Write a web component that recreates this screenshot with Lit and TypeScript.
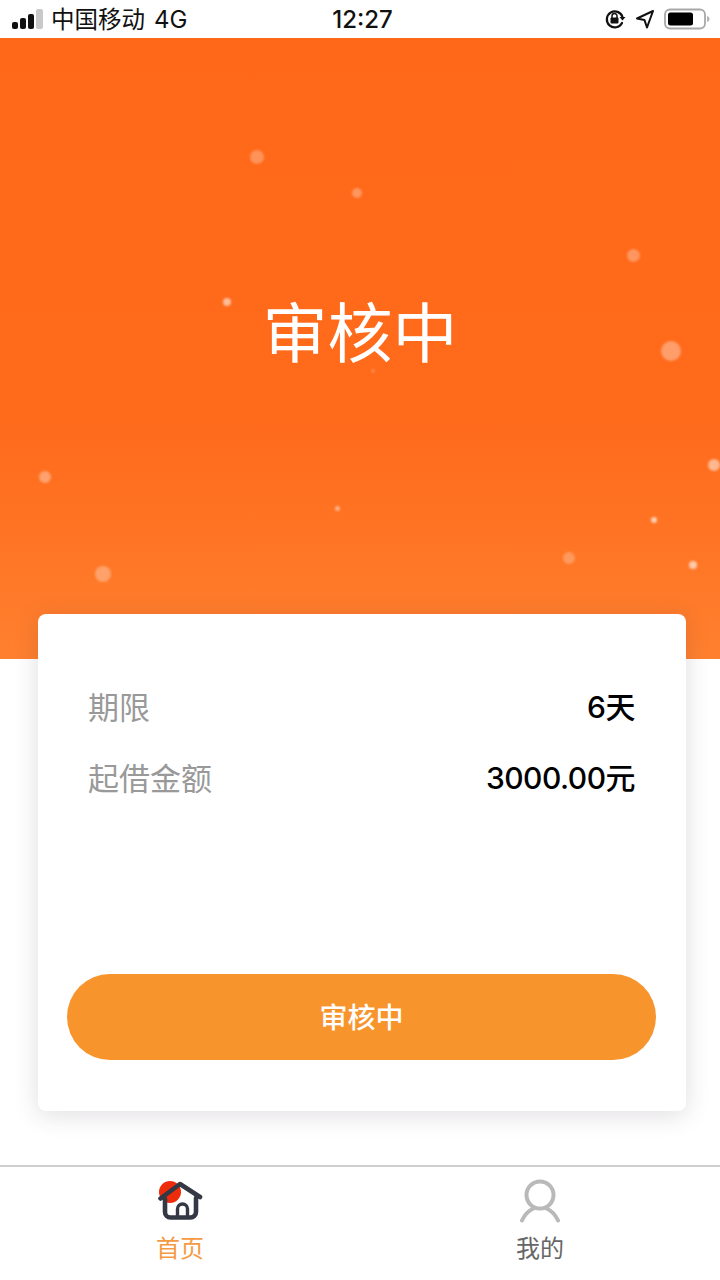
import { LitElement, html, css } from "lit";
import { customElement } from "lit/decorators.js";

const dots: [number, number, number, number][] = [
  [257, 119, 14, 0.28], [357, 155, 10, 0.3], [633, 217, 13, 0.3], [227, 264, 8, 0.55],
  [671, 313, 20, 0.35], [373, 333, 4, 0.2], [714, 427, 12, 0.5], [45, 439, 12, 0.35],
  [337, 470, 5, 0.45], [654, 482, 6, 0.65], [569, 520, 12, 0.25], [693, 527, 8, 0.6],
  [103, 536, 16, 0.3],
];

@customElement("app-root")
export class AppRoot extends LitElement {
  static styles = css`
    :host {
      display: flex;
      flex-direction: column;
      width: 720px;
      height: 1280px;
      background: #fff;
      overflow: hidden;
      font-family: "Liberation Sans", "Noto Sans CJK SC", sans-serif;
    }
    .status {
      height: 38px;
      flex: none;
      display: grid;
      grid-template-columns: 1fr auto 1fr;
      align-items: center;
      padding: 0 10px 0 12px;
      color: #111;
      font-family: Inter, "Noto Sans CJK SC", sans-serif;
      font-size: 24px;
      box-sizing: border-box;
    }
    .left { display: flex; align-items: center; gap: 9px; }
    .signal { display: flex; align-items: flex-end; gap: 2px; height: 20px; }
    .signal i { display: block; width: 6px; background: #111; border-radius: 2px; }
    .signal i:last-child { background: #c9c9c9; width: 7px; }
    .carrier { font-size: 23.5px; margin-left: -1px; position: relative; top: -1px; }
    .time { padding-left: 3px; font-weight: 500; }
    .right { display: flex; justify-content: flex-end; align-items: center; gap: 9px; }
    .hero {
      position: relative;
      height: 621px;
      flex: none;
      background: linear-gradient(180deg, #ff6819 0%, #ff6a1b 62%, #ff802f 100%);
      display: flex;
      justify-content: center;
      padding-top: 254px;
      box-sizing: border-box;
      color: #fff;
      font-size: 65px;
      line-height: 86px;
    }
    .dot { position: absolute; border-radius: 50%; background: #fff; filter: blur(0.8px); }
    .card {
      position: relative;
      flex: none;
      height: 497px;
      margin: -45px 34px 0 38px;
      background: #fff;
      border-radius: 8px;
      box-shadow: 0 4px 24px rgba(70, 50, 70, 0.16);
      padding: 69px 51px 51px 50px;
      box-sizing: border-box;
      display: flex;
      flex-direction: column;
    }
    .row {
      display: flex;
      justify-content: space-between;
      align-items: center;
      height: 44px;
      font-size: 31px;
      margin-bottom: 27px;
    }
    .label { color: #999; }
    .value {
      color: #000;
      font-family: Inter, "Noto Sans CJK SC", sans-serif;
      font-size: 30px;
      letter-spacing: -0.5px;
      font-weight: 500;
    }
    .btn {
      margin: auto -21px 0 -21px;
      height: 86px;
      flex: none;
      border-radius: 43px;
      background: #f8942c;
      color: #fff;
      font-size: 28px;
      font-weight: 500;
      display: flex;
      align-items: center;
      justify-content: center;
      padding-bottom: 3px;
      box-sizing: border-box;
    }
    .tabs {
      margin-top: 54px;
      height: 115px;
      flex: none;
      border-top: 2px solid #cfcfcf;
      box-sizing: border-box;
      display: grid;
      grid-template-columns: 1fr 1fr;
      background: #fff;
    }
    .tab {
      display: flex;
      flex-direction: column;
      align-items: center;
      padding-top: 12px;
      font-size: 24px;
      color: #666;
      gap: 9px;
    }
    .tab.on { color: #f59a42; }
    .tab span { line-height: 34px; }
    svg { display: block; }
  `;

  private signal() {
    return html`<div class="signal">
      ${[7, 11, 15, 20].map((h) => html`<i style="height:${h}px"></i>`)}
    </div>`;
  }

  render() {
    return html`
      <div class="status">
        <div class="left">
          ${this.signal()}
          <span class="carrier">中国移动</span><span>4G</span>
        </div>
        <div class="time">12:27</div>
        <div class="right">
          <svg width="22" height="22" viewBox="0 0 22 22" fill="none">
            <path d="M18.5 9A8 8 0 1 0 18 15" stroke="#111" stroke-width="2.2" stroke-linecap="round"/>
            <path d="M15.5 9h6l-3 3.6z" fill="#111"/>
            <rect x="6.5" y="9.5" width="8" height="6" rx="1" fill="#111"/>
            <path d="M8 10V8a2.5 2.5 0 0 1 5 0v2" stroke="#111" stroke-width="1.5"/>
          </svg>
          <svg width="20" height="20" viewBox="0 0 20 20" fill="none">
            <path d="M18 2 2 9.5l7.5 1.6L12 18.5z" stroke="#111" stroke-width="2" stroke-linejoin="round"/>
          </svg>
          <svg width="46" height="22" viewBox="0 0 46 22" fill="none">
            <rect x="1" y="1.5" width="40" height="19" rx="5" stroke="#a8a8a8" stroke-width="1.8"/>
            <rect x="4" y="4.5" width="25" height="13" rx="2.5" fill="#000"/>
            <path d="M43 8c1.8.5 2.5 1.6 2.5 3s-.7 2.5-2.5 3z" fill="#b5b5b5"/>
          </svg>
        </div>
      </div>

      <div class="hero">
        ${dots.map(
          ([x, y, s, o]) => html`<i
            class="dot"
            style="left:${x - s / 2}px;top:${y - s / 2}px;width:${s}px;height:${s}px;opacity:${o}"
          ></i>`
        )}
        <span>审核中</span>
      </div>

      <div class="card">
        <div class="row"><span class="label">期限</span><span class="value">6天</span></div>
        <div class="row"><span class="label">起借金额</span><span class="value">3000.00元</span></div>
        <div class="btn">审核中</div>
      </div>

      <div class="tabs">
        <div class="tab on">
          <svg width="46" height="44" viewBox="0 0 46 44" fill="none">
            <circle cx="13" cy="13" r="11" fill="#ee2c0c"/>
            <path d="M3.5 19.5 23 5 43 18" stroke="#333844" stroke-width="4.6" stroke-linecap="round" stroke-linejoin="round"/>
            <path d="M8 20v13a5.5 5.5 0 0 0 5.500 5.500h20a5.500 5.500 0 0 0 5.500-5.500V19" stroke="#333844" stroke-width="4.600" stroke-linecap="round"/>
            <path d="M20.500 38V30a5 5 0 0 1 10 0v8" stroke="#333844" stroke-width="3.400"/>
          </svg>
          <span>首页</span>
        </div>
        <div class="tab">
          <svg width="42" height="44" viewBox="0 0 42 44" fill="none">
            <circle cx="21" cy="16" r="13.5" stroke="#b9b9b9" stroke-width="4"/>
            <path d="M3 41.5C6 35 10 31.5 14.5 29.5M39 41.5C36 35 32 31.5 27.5 29.5" stroke="#b9b9b9" stroke-width="4" stroke-linecap="round"/>
          </svg>
          <span>我的</span>
        </div>
      </div>
    `;
  }
}
